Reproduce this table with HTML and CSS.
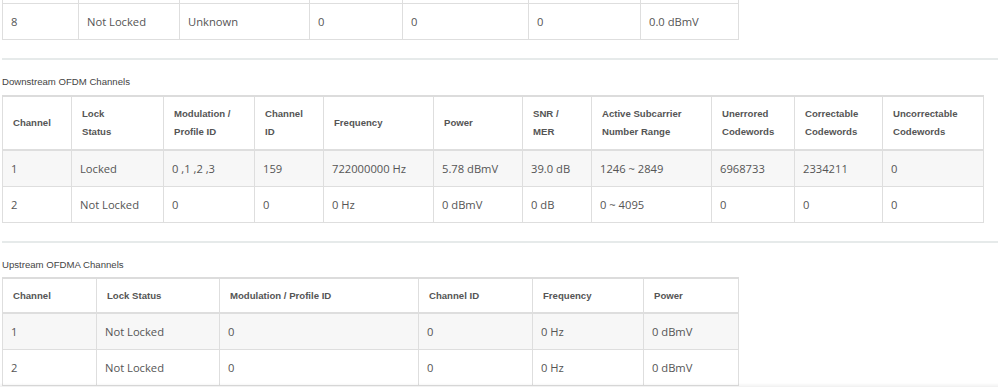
FILE: index.html
```html
<!DOCTYPE html>
<html lang="en">
<head>
<meta charset="utf-8">
<title>Cable Modem Status</title>
<link rel="stylesheet" href="styles.css">
</head>
<body>
<main class="page">
  <section class="block">
    <table class="grid grid-sc">
      <colgroup>
        <col style="width:76px"><col style="width:101px"><col style="width:130px"><col style="width:93px"><col style="width:126px"><col style="width:112px"><col style="width:98px">
      </colgroup>
      <tbody>
        <tr class="row-tail"><td></td><td></td><td></td><td></td><td></td><td></td><td></td></tr>
        <tr><td>8</td><td>Not Locked</td><td>Unknown</td><td>0</td><td>0</td><td>0</td><td>0.0 dBmV</td></tr>
      </tbody>
    </table>
  </section>

  <section class="block">
    <hr class="rule">
    <h3 class="caption">Downstream OFDM Channels</h3>
    <table class="grid grid-ofdm">
      <colgroup>
        <col style="width:69px"><col style="width:92px"><col style="width:91px"><col style="width:69px"><col style="width:110px"><col style="width:89px"><col style="width:69px"><col style="width:120px"><col style="width:83px"><col style="width:88px"><col style="width:101px">
      </colgroup>
      <thead>
        <tr>
          <th>Channel</th>
          <th>Lock<br>Status</th>
          <th>Modulation /<br>Profile ID</th>
          <th>Channel<br>ID</th>
          <th>Frequency</th>
          <th>Power</th>
          <th>SNR /<br>MER</th>
          <th>Active Subcarrier<br>Number Range</th>
          <th>Unerrored<br>Codewords</th>
          <th>Correctable<br>Codewords</th>
          <th>Uncorrectable<br>Codewords</th>
        </tr>
      </thead>
      <tbody>
        <tr><td>1</td><td>Locked</td><td>0 ,1 ,2 ,3</td><td>159</td><td>722000000 Hz</td><td>5.78 dBmV</td><td>39.0 dB</td><td>1246 ~ 2849</td><td>6968733</td><td>2334211</td><td>0</td></tr>
        <tr><td>2</td><td>Not Locked</td><td>0</td><td>0</td><td>0 Hz</td><td>0 dBmV</td><td>0 dB</td><td>0 ~ 4095</td><td>0</td><td>0</td><td>0</td></tr>
      </tbody>
    </table>
  </section>

  <section class="block">
    <hr class="rule">
    <h3 class="caption">Upstream OFDMA Channels</h3>
    <table class="grid grid-ofdma">
      <colgroup>
        <col style="width:94px"><col style="width:123px"><col style="width:199px"><col style="width:114px"><col style="width:111px"><col style="width:95px">
      </colgroup>
      <thead>
        <tr>
          <th>Channel</th>
          <th>Lock Status</th>
          <th>Modulation / Profile ID</th>
          <th>Channel ID</th>
          <th>Frequency</th>
          <th>Power</th>
        </tr>
      </thead>
      <tbody>
        <tr><td>1</td><td>Not Locked</td><td>0</td><td>0</td><td>0 Hz</td><td>0 dBmV</td></tr>
        <tr><td>2</td><td>Not Locked</td><td>0</td><td>0</td><td>0 Hz</td><td>0 dBmV</td></tr>
      </tbody>
    </table>
  </section>
</main>
<div class="fade-edge"></div>
</body>
</html>
```

FILE: styles.css
```css
html, body {
  margin: 0;
  padding: 0;
  background: #fff;
  overflow: hidden;
}

.page {
  padding-left: 2px;
  font-family: "Open Sans", "Liberation Sans", sans-serif;
  color: #555;
}

.rule {
  margin: 18px 0 0 0;
  border: 0;
  border-top: 2px solid #e6eaea;
  height: 0;
}

.caption {
  margin: 15px 0 0 0;
  font-family: "Liberation Sans", Arial, sans-serif;
  font-weight: normal;
  font-size: 9.6px;
  line-height: 14px;
  color: #444;
}

.grid {
  border-collapse: collapse;
  table-layout: fixed;
  margin-top: 6px;
  border-top: 2px solid #dcdcdc;
}

/* tail of the single-carrier table that continues above */
.grid-sc {
  width: 736px;
  margin-top: 0;
  border-top: 0;
}

.grid-sc .row-tail td {
  height: 3px;
  padding: 0;
  border-top: 0;
}

.grid-ofdm {
  width: 981px;
}

.grid-ofdma {
  width: 736px;
  margin-top: 5px;
}

.grid th,
.grid td {
  border: 1px solid #dedede;
  text-align: left;
  vertical-align: middle;
  overflow: hidden;
  white-space: nowrap;
}

.grid th {
  font-family: "Liberation Sans", Arial, sans-serif;
  font-weight: bold;
  font-size: 9.6px;
  line-height: 18px;
  color: #555;
  padding: 8px 6px 8px 10px;
  border-bottom: 2px solid #dedede;
}

.grid td {
  font-size: 11.2px;
  line-height: 17px;
  padding: 9px 6px 9px 8px;
  color: #555;
}

.grid tbody tr:nth-child(odd) td {
  background: #f7f7f7;
}

.grid-sc tbody td,
.grid-sc tbody tr:nth-child(odd) td {
  background: #fff;
}

.grid-ofdma th {
  padding-top: 8px;
  padding-bottom: 7px;
}

.fade-edge {
  position: fixed;
  left: 0;
  right: 0;
  bottom: 0;
  height: 4px;
  background: linear-gradient(rgba(0, 0, 0, 0), rgba(0, 0, 0, 0.06));
  pointer-events: none;
}
```
